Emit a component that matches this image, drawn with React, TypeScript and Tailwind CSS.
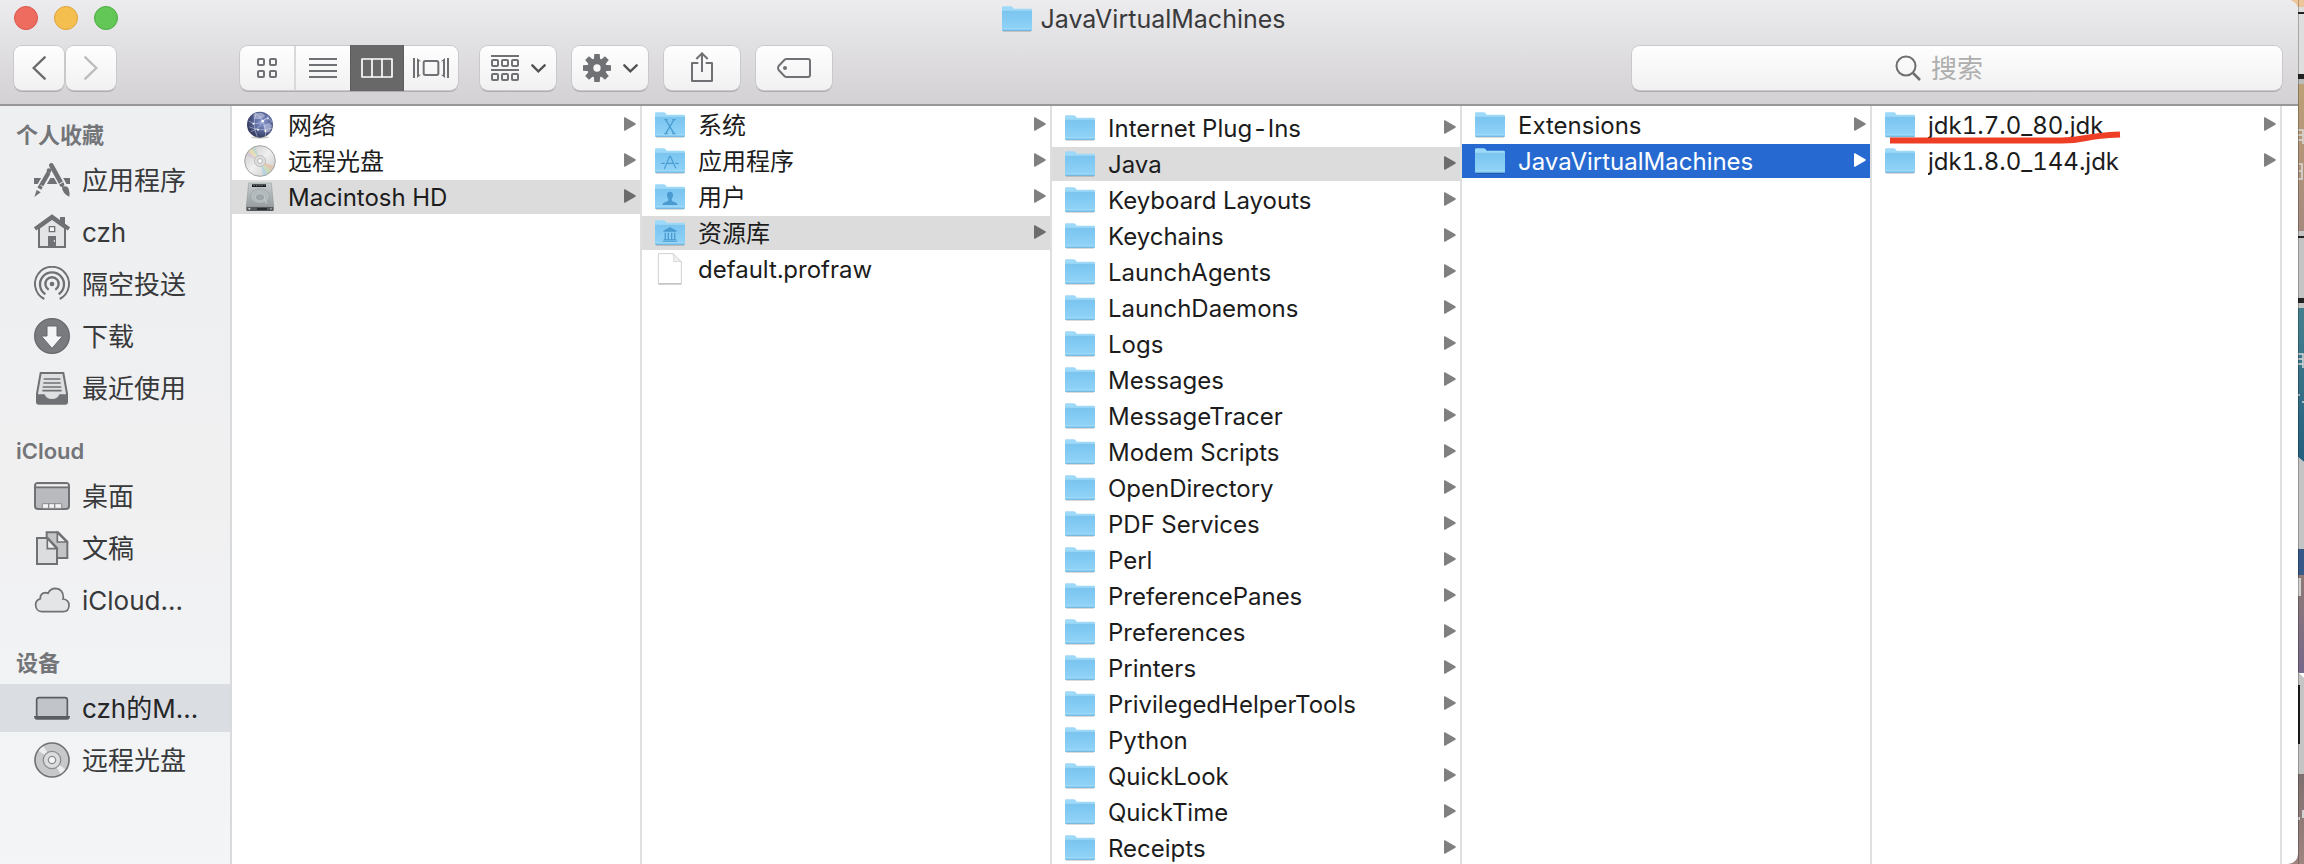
import type { ReactNode } from "react";

type Badge = "system" | "apps" | "users" | "library";
type Entry = { name: string; icon: ReactNode; leaf?: boolean; state?: "path" | "active"; marked?: boolean };

const GRAY = "#707174";

/* ---------- file icons ---------- */

function Folder({ badge }: { badge?: Badge }) {
  return (
    <svg width="30" height="26" viewBox="0 0 90 78" aria-hidden="true">
      <path d="M3 74h84v3H3z" fill="#000" opacity=".22" />
      <path d="M0 5q0-4 4-4h22q4 0 6 3l3 4h51q4 0 4 4v60H0z" fill="#9dd9f9" />
      <path d="M0 17h90v54q0 3-3 3H3q-3 0-3-3z" fill="url(#folderBody)" />
      <path d="M0 16h90" stroke="#6db7e2" strokeWidth="2" />
      <path d="M1 68h88" stroke="#a5dcfa" strokeWidth="2" />
      <path d="M1 73h88" stroke="#62add9" strokeWidth="2.5" />
      {badge === "system" && <path d="M32 23l25 42M57 23L32 65M28 23h10M52 23h10M28 65h10M52 65h10" stroke="#4a9bd0" strokeWidth="4" fill="none" />}
      {badge === "apps" && (
        <path d="M46 25L62 60M44 25L28 62M20 46h8M36 46h18M62 46h8" stroke="#4a9bd0" strokeWidth="3.5" fill="none" strokeLinecap="round" />
      )}
      {badge === "users" && (
        <path d="M45 23c7 0 10 5 9 12-1 5-3 8-4 10 0 6 2 7 8 9 7 2 9 4 9 9H23c0-5 2-7 9-9 6-2 8-3 8-9-1-2-3-5-4-10-1-7 2-12 9-12z" fill="#4a9bd0" />
      )}
      {badge === "library" && (
        <path d="M45 21l20 11v3H25v-3zM29 38h4v20h-4zM38 38h4v20h-4zM48 38h4v20h-4zM57 38h4v20h-4zM26 58h38v3H26zM23 62h44v3H23z" fill="#4a9bd0" />
      )}
    </svg>
  );
}

function Globe() {
  return (
    <svg width="28" height="28" viewBox="0 0 84 84" aria-hidden="true">
      <ellipse cx="42" cy="79" rx="28" ry="4" fill="#000" opacity=".2" />
      <circle cx="42" cy="41" r="39" fill="url(#globeFill)" />
      <path d="M22 10q14-7 26-4l10 8-14 10-20 0zM52 42l18-6 8 8-6 18-14 4z" fill="#d5dbf0" opacity=".5" />
      <path d="M8 30Q30 46 50 30T78 34M14 62Q40 54 50 30Q44 14 26 6M50 30Q62 56 58 76M30 8Q18 40 34 78M50 30Q66 22 68 14M10 48Q44 62 78 52" stroke="#e2e8fa" strokeWidth="1.8" fill="none" opacity=".75" />
      <g fill="#fff">
        <circle cx="50" cy="30" r="4" />
        <circle cx="36" cy="56" r="3" />
        <circle cx="58" cy="60" r="3" />
        <circle cx="22" cy="38" r="2.5" />
        <circle cx="66" cy="22" r="2.5" />
      </g>
    </svg>
  );
}

function Disc() {
  return (
    <svg width="32" height="32" viewBox="0 0 96 96" aria-hidden="true">
      <circle cx="48" cy="48" r="46" fill="url(#discFill)" />
      <path d="M48 48L12 20A46 46 0 0 1 24 9z" fill="#f1dc98" opacity=".5" />
      <path d="M48 48L24 9A46 46 0 0 1 34 5z" fill="#a9d6bf" opacity=".5" />
      <path d="M48 48L5 32A46 46 0 0 1 12 20z" fill="#d7b3c9" opacity=".4" />
      <path d="M48 48L91 64A46 46 0 0 1 82 78z" fill="#e5b48a" opacity=".5" />
      <path d="M48 48L82 78A46 46 0 0 1 70 88z" fill="#c3d9a0" opacity=".6" />
      <path d="M48 48L70 88A46 46 0 0 1 58 93z" fill="#a2cfe8" opacity=".6" />
      <circle cx="48" cy="48" r="46" fill="none" stroke="#a3a3a3" strokeWidth="3" />
      <circle cx="48" cy="48" r="17" fill="#dcdcdc" stroke="#b0b0b0" strokeWidth="2" />
      <circle cx="48" cy="48" r="7" fill="#fafafa" stroke="#a0a0a0" strokeWidth="2" />
    </svg>
  );
}

function HardDrive() {
  return (
    <svg width="28" height="30" viewBox="0 0 84 90" aria-hidden="true">
      <path d="M8 3h68l7 68H1z" fill="url(#driveFill)" stroke="#8e9495" strokeWidth="1.5" />
      <path d="M1 70h82v14q0 3-3 3H4q-3 0-3-3z" fill="#54585a" />
      <path d="M1 70h82v4H1z" fill="#b7bcbd" />
      <path d="M18 7h42v8H18z" fill="#17191a" />
      <path d="M22 11h34" stroke="#9aa" strokeWidth="2" strokeDasharray="5 3" />
      <ellipse cx="42" cy="42" rx="29" ry="22" fill="#b3babc" stroke="#959c9e" strokeWidth="1.5" />
      <ellipse cx="42" cy="46" rx="14" ry="11" fill="#9da5a8" stroke="#cdd2d2" strokeWidth="2" />
      <path d="M54 52q10 4 6 14" stroke="#d9dddd" strokeWidth="2" fill="none" />
      <path d="M36 78v6M42 78v6M48 78v6M54 78v6M60 78v6" stroke="#000" strokeWidth="3" />
      <circle cx="10" cy="80" r="3" fill="#d8dcdd" />
      <circle cx="75" cy="80" r="2.5" fill="#a9adae" />
    </svg>
  );
}

function BlankFile() {
  return (
    <svg width="26" height="32" viewBox="0 0 78 96" aria-hidden="true">
      <path d="M4 2h44l25 25v65H4z" fill="#fff" stroke="#c6c6c6" strokeWidth="2.5" />
      <path d="M4 93h69" stroke="#b0b0b0" strokeWidth="3" />
      <path d="M48 2q4 14 2 24 10-2 23 1z" fill="#f1f1f1" stroke="#c9c9c9" strokeWidth="2" />
    </svg>
  );
}

/* ---------- sidebar icons ---------- */

function SideIcon({ children }: { children: ReactNode }) {
  return (
    <svg width="36" height="36" viewBox="0 0 108 108" fill="none" className="shrink-0" aria-hidden="true">
      {children}
    </svg>
  );
}

const AppsIcon = (
  <SideIcon>
    <path d="M0 48h108v18H0z" fill={GRAY} />
    <path d="M50 22L8 96M52 8L100 96" stroke="#eeeff1" strokeWidth="24" />
    <path d="M52 10L84 68" stroke={GRAY} strokeWidth="14" strokeLinecap="round" />
    <path d="M44 32L16 80" stroke={GRAY} strokeWidth="13" />
    <path d="M36 22l14 8M20 70l14 8M76 66l16-9" stroke="#eeeff1" strokeWidth="3" />
    <circle cx="45" cy="26" r="7" fill={GRAY} />
    <path d="M8 84l12 7-19 14z" fill={GRAY} />
    <path d="M84 76q14-8 20 4 4 12 2 24-10-4-16-12-6-8-6-16z" fill={GRAY} />
  </SideIcon>
);

const HomeIcon = (
  <SideIcon>
    <path d="M15 42L54 14l39 28v57H15z" fill="#e3e4e6" stroke={GRAY} strokeWidth="6" />
    <path d="M78 9h15v30L78 28z" fill={GRAY} />
    <path d="M3 45L54 8l51 37" stroke={GRAY} strokeWidth="12" />
    <path d="M46 38h16v15H46z" fill="#f5f5f6" stroke={GRAY} strokeWidth="4" />
    <path d="M42 66h24v34H42z" fill={GRAY} />
    <path d="M61 78v6" stroke="#eee" strokeWidth="3" />
  </SideIcon>
);

const AirDropIcon = (
  <SideIcon>
    <path d="M31 99A51 51 0 1 1 77 99" stroke={GRAY} strokeWidth="6" />
    <path d="M34 85A36 36 0 1 1 74 85" stroke={GRAY} strokeWidth="7" />
    <path d="M44 71A20 20 0 1 1 64 71" stroke={GRAY} strokeWidth="7" />
    <circle cx="54" cy="54" r="7" fill={GRAY} />
  </SideIcon>
);

const DownloadIcon = (
  <SideIcon>
    <circle cx="54" cy="54" r="52" fill="#7a7b7e" stroke="#68696c" strokeWidth="4" />
    <path d="M39 24h30v30h17L54 91 22 54h17z" fill="#f4f5f6" stroke="#68696c" strokeWidth="3" />
  </SideIcon>
);

const RecentIcon = (
  <SideIcon>
    <path d="M20 9h68l11 62v26q0 4-4 4H13q-4 0-4-4V71z" fill="#dedfe1" stroke={GRAY} strokeWidth="6" />
    <path d="M29 27h50M28 39h52M26 51h56M25 62h58" stroke={GRAY} strokeWidth="5" />
    <path d="M8 73h24q4 14 22 14t22-14h24v25q0 4-4 4H12q-4 0-4-4z" fill={GRAY} />
  </SideIcon>
);

const DesktopIcon = (
  <SideIcon>
    <rect x="3" y="15" width="102" height="78" rx="9" fill="#b9babd" stroke={GRAY} strokeWidth="6" />
    <path d="M7 19h94v7H7z" fill="#f0f0f1" />
    <path d="M4 28h100" stroke={GRAY} strokeWidth="5" />
    <path d="M25 77h58v14H25z" fill="#f3f3f4" stroke="#8a8b8e" strokeWidth="3" />
    <path d="M44 76v15M62 76v15" stroke="#8a8b8e" strokeWidth="4" />
  </SideIcon>
);

const DocumentsIcon = (
  <SideIcon>
    <path d="M38 7h34l28 28v49H38z" fill="#c3c4c6" stroke={GRAY} strokeWidth="6" />
    <path d="M70 8v28h28z" fill="#eee" stroke={GRAY} strokeWidth="5" />
    <path d="M9 24h32l28 30v48H9z" fill="#dcdddf" stroke={GRAY} strokeWidth="6" />
    <path d="M40 25v31h28z" fill="#f2f2f3" stroke={GRAY} strokeWidth="5" />
  </SideIcon>
);

const CloudIcon = (
  <SideIcon>
    <path d="M23 89a20 20 0 0 1-4-39q-1-17 16-18 4 0 7 2 7-15 23-15 22 2 23 26 0 4-1 6 18 2 18 19 0 19-18 19z" fill="#e4e5e7" stroke={GRAY} strokeWidth="5" />
  </SideIcon>
);

const LaptopIcon = (
  <SideIcon>
    <rect x="8" y="23" width="92" height="60" rx="7" fill="#c1c4c8" stroke="#5a5d61" strokeWidth="5" />
    <path d="M0 78h108q0 11-9 11H9q-9 0-9-11z" fill="#5a5d61" />
  </SideIcon>
);

const DiscGrayIcon = (
  <SideIcon>
    <circle cx="54" cy="54" r="51" fill="#c7c8ca" stroke={GRAY} strokeWidth="5" />
    <path d="M54 54L14 26A49 49 0 0 1 28 13zM54 54l40 28A49 49 0 0 1 80 95z" fill="#eeeeef" />
    <circle cx="54" cy="54" r="26" fill="#dcdddf" stroke="#8c8d90" strokeWidth="4" />
    <circle cx="54" cy="54" r="11" fill="#f4f5f6" stroke="#8c8d90" strokeWidth="4" />
  </SideIcon>
);

/* ---------- data ---------- */

const sections = [
  {
    title: "个人收藏",
    items: [
      { name: "应用程序", icon: AppsIcon },
      { name: "czh", icon: HomeIcon },
      { name: "隔空投送", icon: AirDropIcon },
      { name: "下载", icon: DownloadIcon },
      { name: "最近使用", icon: RecentIcon },
    ],
  },
  {
    title: "iCloud",
    items: [
      { name: "桌面", icon: DesktopIcon },
      { name: "文稿", icon: DocumentsIcon },
      { name: "iCloud...", icon: CloudIcon },
    ],
  },
  {
    title: "设备",
    items: [
      { name: "czh的M...", icon: LaptopIcon, selected: true },
      { name: "远程光盘", icon: DiscGrayIcon },
    ],
  },
] as { title: string; items: { name: string; icon: ReactNode; selected?: boolean }[] }[];

const folder = (name: string, state?: Entry["state"]): Entry => ({ name, icon: <Folder />, state });

const columns: { entries: Entry[]; pad: string }[] = [
  {
    pad: "pt-0.5",
    entries: [
      { name: "网络", icon: <Globe /> },
      { name: "远程光盘", icon: <Disc /> },
      { name: "Macintosh HD", icon: <HardDrive />, state: "path" },
    ],
  },
  {
    pad: "pt-0.5",
    entries: [
      { name: "系统", icon: <Folder badge="system" /> },
      { name: "应用程序", icon: <Folder badge="apps" /> },
      { name: "用户", icon: <Folder badge="users" /> },
      { name: "资源库", icon: <Folder badge="library" />, state: "path" },
      { name: "default.profraw", icon: <BlankFile />, leaf: true },
    ],
  },
  {
    pad: "pt-[5px]",
    entries: [
      folder("Internet Plug-Ins"),
      folder("Java", "path"),
      ...[
        "Keyboard Layouts",
        "Keychains",
        "LaunchAgents",
        "LaunchDaemons",
        "Logs",
        "Messages",
        "MessageTracer",
        "Modem Scripts",
        "OpenDirectory",
        "PDF Services",
        "Perl",
        "PreferencePanes",
        "Preferences",
        "Printers",
        "PrivilegedHelperTools",
        "Python",
        "QuickLook",
        "QuickTime",
        "Receipts",
      ].map((n) => folder(n)),
    ],
  },
  { pad: "pt-0.5", entries: [folder("Extensions"), folder("JavaVirtualMachines", "active")] },
  { pad: "pt-0.5", entries: [{ ...folder("jdk1.7.0_80.jdk"), marked: true }, folder("jdk1.8.0_144.jdk")] },
];

/* ---------- pieces ---------- */

function Row({ entry }: { entry: Entry }) {
  const tone =
    entry.state === "active" ? "bg-[#266ad1] text-white" : entry.state === "path" ? "bg-[#dcdcdc] text-[#1c1c1c]" : "text-[#1c1c1c]";
  const arrow = entry.state === "active" ? "#fff" : entry.state === "path" ? "#6c6c6c" : "#808080";
  return (
    <li className="relative">
      <button type="button" className={`flex h-[34px] w-full items-center gap-3 pl-3 pr-1 text-left text-2xl ${tone}`}>
        <span className="flex h-8 w-8 shrink-0 items-center justify-center">{entry.icon}</span>
        <span className="min-w-0 flex-1 truncate pt-0.5 leading-[34px] tabular-nums">{entry.name}</span>
        {!entry.leaf && (
          <svg width="12" height="14" viewBox="0 0 12 14" className="mb-0.5 shrink-0" aria-hidden="true">
            <path d="M0 1Q0 0 1 .3L11.4 6.3q.8.7 0 1.4L1 13.7q-1 .3-1-.7z" fill={arrow} />
          </svg>
        )}
      </button>
      {entry.marked && (
        <svg width="236" height="16" viewBox="0 0 236 16" className="pointer-events-none absolute left-4 top-[23px] z-10" aria-hidden="true">
          <path d="M2 9.5h172q12 0 24-2.500T232 3.500" fill="none" stroke="#ee3f26" strokeWidth="6" />
        </svg>
      )}
    </li>
  );
}

const keyFace = "bg-linear-to-b from-[#fefefe] to-[#f1f1f1] shadow-[0_0_0_1px_#cac8cb,0_2px_0_0_#aeacaf]";

function ToolButton({ label, children, width = "w-[76px]" }: { label: string; children: ReactNode; width?: string }) {
  return (
    <button type="button" aria-label={label} className={`flex h-11 items-center justify-center gap-3 rounded-lg ${width} ${keyFace}`}>
      {children}
    </button>
  );
}

const Caret = (
  <svg width="15" height="9" viewBox="0 0 45 27" fill="none" aria-hidden="true">
    <path d="M4 4l18 18L41 4" stroke="#525252" strokeWidth="7" strokeLinecap="round" />
  </svg>
);

const Squares = ({ points }: { points: number[][] }) => (
  <>
    {points.map(([x, y]) => (
      <rect key={`${x}-${y}`} x={x + 3} y={y + 3} width="18" height="18" rx="3" stroke={GRAY} strokeWidth="6" />
    ))}
  </>
);

function Toolbar() {
  return (
    <header className="border-b-2 border-[#989699] bg-linear-to-b from-[#ecebed] to-[#d3d1d4]">
      <div className="flex h-9 items-center pl-3.5 pr-6">
        <div className="flex flex-1 gap-4">
          <button type="button" aria-label="Close" className="h-6 w-6 rounded-full border border-[#d9574c] bg-[#ee6b5f]" />
          <button type="button" aria-label="Minimise" className="h-6 w-6 rounded-full border border-[#dda33c] bg-[#f5bf4f]" />
          <button type="button" aria-label="Zoom" className="h-6 w-6 rounded-full border border-[#4cad42] bg-[#62c756]" />
        </div>
        <h1 className="flex items-center gap-2 pt-0.5 text-[25px] leading-9 text-[#3a3a3c]">
          <Folder />
          JavaVirtualMachines
        </h1>
        <div className="flex-1" />
      </div>
      <div className="flex items-center pb-3.5 pl-3.5 pr-4 pt-2.5">
        <div className="flex gap-0.5">
          <ToolButton label="Back" width="w-[50px]">
            <svg width="14" height="24" viewBox="0 0 42 72" fill="none" aria-hidden="true">
              <path d="M38 4L5 36l33 32" stroke="#6b6b6b" strokeWidth="7" strokeLinecap="round" />
            </svg>
          </ToolButton>
          <ToolButton label="Forward" width="w-[50px]">
            <svg width="14" height="24" viewBox="0 0 42 72" fill="none" aria-hidden="true">
              <path d="M4 4l33 32L4 68" stroke="#bcbcbc" strokeWidth="7" strokeLinecap="round" />
            </svg>
          </ToolButton>
        </div>
        <div className={`ml-[124px] flex h-11 w-[218px] rounded-lg ${keyFace}`}>
          <button type="button" aria-label="Icon view" className="flex w-14 items-center justify-center border-r-2 border-[#d9d9d9]">
            <svg width="20" height="20" viewBox="0 0 60 60" fill="none" aria-hidden="true">
              <Squares points={[[0, 0], [36, 0], [0, 36], [36, 36]]} />
            </svg>
          </button>
          <button type="button" aria-label="List view" className="flex w-[54px] items-center justify-center">
            <svg width="28" height="20" viewBox="0 0 84 60" aria-hidden="true">
              <path d="M0 3h84M0 21h84M0 39h84M0 57h84" stroke={GRAY} strokeWidth="6" />
            </svg>
          </button>
          <button type="button" aria-label="Column view" aria-pressed="true" className="-mt-px flex h-[46px] w-[54px] items-center justify-center border-x border-[#5c5c5c] bg-[#686868]">
            <svg width="32" height="20" viewBox="0 0 96 60" fill="none" aria-hidden="true">
              <path d="M3 3h90v54H3zM33 3v54M63 3v54" stroke="#fff" strokeWidth="5" strokeLinejoin="round" />
            </svg>
          </button>
          <button type="button" aria-label="Cover flow" className="flex w-[54px] items-center justify-center">
            <svg width="36" height="20" viewBox="0 0 108 60" fill="none" aria-hidden="true">
              <path d="M3 0v60M105 0v60" stroke={GRAY} strokeWidth="6" />
              <rect x="32" y="9" width="44" height="42" rx="5" stroke={GRAY} strokeWidth="6" />
              <path d="M12 0l12 10h-6v40h6L12 60zM96 0L84 10h6v40h-6l12 10z" fill={GRAY} />
            </svg>
          </button>
        </div>
        <div className="ml-[22px] flex gap-4">
          <ToolButton label="Arrange">
            <svg width="28" height="26" viewBox="0 0 84 78" fill="none" aria-hidden="true">
              <path d="M0 3h84M0 45h84" stroke={GRAY} strokeWidth="6" />
              <Squares points={[[0, 12], [30, 12], [60, 12], [0, 54], [30, 54], [60, 54]]} />
            </svg>
            {Caret}
          </ToolButton>
          <ToolButton label="Action">
            <svg width="28" height="28" viewBox="-42 -42 84 84" aria-hidden="true">
              <g fill={GRAY}>
                {[0, 45, 90, 135].map((a) => (
                  <path key={a} d="M-8-42H8L10-20V20L8 42H-8L-10 20V-20z" transform={`rotate(${a})`} />
                ))}
                <circle r="29" />
              </g>
              <circle r="11" fill="#f8f8f8" />
            </svg>
            {Caret}
          </ToolButton>
          <ToolButton label="Share">
            <svg width="22" height="30" viewBox="0 0 66 90" fill="none" className="mb-0.5" aria-hidden="true">
              <path d="M22 33H3v54h60V33H44" stroke={GRAY} strokeWidth="6" strokeLinejoin="round" />
              <path d="M33 60V4M16 21L33 4l17 17" stroke={GRAY} strokeWidth="6" />
            </svg>
          </ToolButton>
          <ToolButton label="Tags">
            <svg width="34" height="20" viewBox="0 0 102 60" fill="none" aria-hidden="true">
              <path d="M29 3h64q6 0 6 6v42q0 6-6 6H29q-4 0-7-3L5 36q-4-6 0-12L22 6q3-3 7-3z" stroke={GRAY} strokeWidth="6" />
              <circle cx="24" cy="30" r="6" fill={GRAY} />
            </svg>
          </ToolButton>
        </div>
        <label className={`ml-auto flex h-11 w-[650px] items-center rounded-lg ${keyFace}`}>
          <span className="w-[263px] shrink-0" />
          <svg width="26" height="26" viewBox="0 0 26 26" fill="none" className="shrink-0" aria-hidden="true">
            <circle cx="11" cy="11" r="9.500" stroke="#6f6f6f" strokeWidth="2" />
            <path d="M18 18l7 7" stroke="#6f6f6f" strokeWidth="2.500" />
          </svg>
          <input
            type="search"
            aria-label="搜索"
            placeholder="搜索"
            className="h-10 min-w-0 flex-1 bg-transparent pl-2.5 pr-4 text-[26px] outline-none placeholder:text-[#aeaeae]"
          />
        </label>
      </div>
    </header>
  );
}

function Sidebar() {
  return (
    <nav className="w-[232px] shrink-0 overflow-hidden border-r-2 border-[#d9dadb] bg-linear-to-b from-[#edeff1] via-[#f0f0f1] to-[#f3f5f7] pt-1.5">
      {sections.map((s) => (
        <section key={s.title} className="mb-4">
          <h2 className="h-11 pl-4 pt-px text-[22px] font-semibold leading-[44px] text-[#737578]">{s.title}</h2>
          <ul className="flex flex-col gap-1">
            {s.items.map((it) => (
              <li key={it.name}>
                <a
                  href="#"
                  className={`flex h-12 items-center gap-3 pl-[34px] text-[26px] leading-[48px] ${it.selected ? "bg-[#dadde1] text-[#262628]" : "text-[#38393b]"}`}
                >
                  {it.icon}
                  <span className="whitespace-nowrap pt-0.5">{it.name}</span>
                </a>
              </li>
            ))}
          </ul>
        </section>
      ))}
    </nav>
  );
}

/* Sliver of the desktop that shows beside the window. */
function Desktop() {
  return (
    <svg width="16" height="864" viewBox="0 0 16 864" className="absolute right-0 top-0" aria-hidden="true">
      <path d="M0 0h16v8H0z" fill="#ecc59b" />
      <path d="M0 7h16v78H0z" fill="#dedede" />
      <path d="M0 12h16v2H0zM0 74h16v5H0z" fill="#222" />
      <path d="M0 79h16v5H0z" fill="#bcbcbc" />
      <path d="M0 84h16v147H0z" fill="url(#sand)" />
      <path d="M0 231h16v77H0z" fill="#c4c4c4" />
      <path d="M0 236h16v2H0zM0 298h16v5H0z" fill="#222" />
      <path d="M0 308h16v154l-6-5H0z" fill="url(#sea)" />
      <path d="M10 457l6 5v88H10z" fill="#c4c4c4" />
      <path d="M10 549h6v27h-6z" fill="#36598a" />
      <path d="M10 575h6v98h-6z" fill="url(#dusk)" />
      <path d="M10 672l6 6v97h-6z" fill="#c4c4c4" />
      <path d="M10 685h2v59h-2z" fill="#1c1c1c" />
      <path d="M0 774h16v90H0z" fill="url(#clay)" />
      <path d="M10 130h5v14M10 135h5M10 140h5M11 164h3v7h-3M14 171v8h-4M10 354h5v14M10 359h5M10 364h5M10 395h2M14 402h2" stroke="#dcdcdc" strokeWidth="1.500" fill="none" />
      <path d="M10 578h3v18h-3zM14 810h2v8h-2zM10 817h2v3h-2z" fill="#d2d2d2" />
      <path d="M10 0h1v864h-1z" fill="#000" opacity=".25" />
    </svg>
  );
}

function Gradients() {
  const ramps: [string, string, string][] = [
    ["folderBody", "#7ac5f1", "#93d4f8"],
    ["driveFill", "#c6cccd", "#9aa1a3"],
    ["sand", "#bca177", "#a4897e"],
    ["sea", "#46808f", "#24607f"],
    ["dusk", "#8f7a76", "#76688a"],
    ["clay", "#7d706f", "#a08580"],
  ];
  return (
    <svg width="0" height="0" className="absolute" aria-hidden="true">
      <defs>
        {ramps.map(([id, a, b]) => (
          <linearGradient key={id} id={id} x1="0" y1="0" x2="0" y2="1">
            <stop offset="0" stopColor={a} />
            <stop offset="1" stopColor={b} />
          </linearGradient>
        ))}
        <linearGradient id="discFill" x1="0" y1="0" x2="1" y2="1">
          <stop offset="0" stopColor="#c6c6c6" />
          <stop offset=".5" stopColor="#efefef" />
          <stop offset="1" stopColor="#c6c6c6" />
        </linearGradient>
        <radialGradient id="globeFill" cx=".6" cy=".4" r=".65">
          <stop offset="0" stopColor="#8b9ad0" />
          <stop offset=".5" stopColor="#5b689c" />
          <stop offset="1" stopColor="#2f3555" />
        </radialGradient>
      </defs>
    </svg>
  );
}

export default function App() {
  return (
    <div className="relative flex h-screen overflow-hidden font-['Inter','Noto_Sans_CJK_SC',sans-serif]">
      <Gradients />
      <Desktop />
      <main className="relative mr-1.5 flex min-w-0 flex-1 flex-col overflow-hidden rounded-r-[10px] bg-white">
        <Toolbar />
        <div className="flex min-h-0 flex-1">
          <Sidebar />
          <div className="grid min-w-0 flex-1 grid-cols-5 overflow-hidden pr-4">
            {columns.map((c, i) => (
              <ul key={i} className={`flex min-w-0 flex-col gap-0.5 border-r-2 border-[#dfdfdf] ${c.pad}`}>
                {c.entries.map((e) => (
                  <Row key={e.name} entry={e} />
                ))}
              </ul>
            ))}
          </div>
        </div>
      </main>
    </div>
  );
}
